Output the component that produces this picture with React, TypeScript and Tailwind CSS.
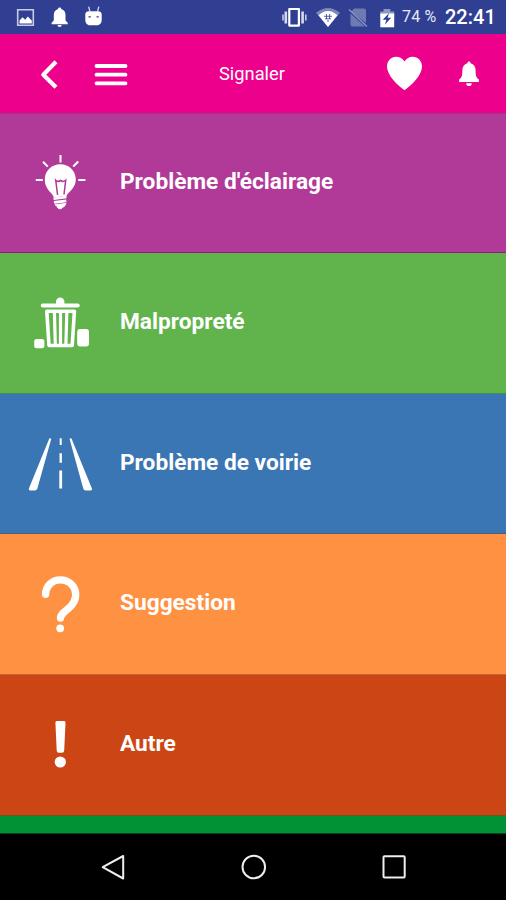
import React from 'react'

type CategoryRowProps = {
  icon: React.ReactNode
  label: string
  className: string
  labelClassName: string
}

function CategoryRow({ icon, label, className, labelClassName }: CategoryRowProps) {
  return (
    <li className={`flex shrink-0 items-start border-b pl-[15px] ${className}`}>
      {icon}
      <span className={`ml-[5px] whitespace-nowrap text-[22.7px] leading-[30px] font-bold ${labelClassName}`}>{label}</span>
    </li>
  )
}

function BulbIcon() {
  return (
    <svg className="mt-[26px] h-[86px] w-[100px]" viewBox="0 0 100 86" fill="none" stroke="white">
      <path d="M45.5 15v7.5M28 21.8l4.8 4.8M63.2 21.5l-5 5M20.8 40h7M63.2 40h7.2" strokeWidth="2" />
      <path d="M45.4 24.2c-9 0-15.6 6.8-15.6 15.4 0 5.6 2.4 9.6 5.7 12.9 1.8 1.8 2.9 3.1 3.2 4.9l12.9-1.4c.3-1.4 1.4-2.3 2.9-3.9 3.3-3.4 6.3-7 6.3-12.5 0-8.6-6.6-15.4-15.4-15.4z" fill="white" stroke="none" />
      <path d="M42.6 55l-1.9-14.8q2.3 2.3 4.8.2 2.5 2.1 5.2-.2L49 54.5" stroke="#b13997" strokeWidth="1.5" />
      <path d="M38.5 58.7l13-1.7M39 62.4l12.3-1.5" strokeWidth="2.6" />
      <path d="M40 64.7l11-1.3-1.6 3-1.9.9-1.7 1.7-3-.9-.4-1.4z" fill="white" strokeWidth=".9" />
    </svg>
  )
}

function TrashIcon() {
  return (
    <svg className="mt-[27px] h-[86px] w-[100px]" viewBox="0 0 100 86" fill="none" stroke="white">
      <path d="M27.7 25.4h35" strokeWidth="4" strokeLinecap="round" />
      <path d="M41 24v-2.2a4.2 4.2 0 0 1 8.4 0V24z" fill="white" stroke="none" />
      <path d="M31.8 31.3h27.6l-2.2 34.2H34z" strokeWidth="3.6" strokeLinejoin="round" />
      <path d="M39.4 32l.9 32.5M45.5 32v32.5M51.8 32l-.9 32.5" strokeWidth="3.2" />
      <rect x="19.2" y="59" width="10.2" height="9.2" rx="2.5" fill="white" stroke="none" />
      <rect x="62.2" y="49" width="11.8" height="17.5" rx="3" fill="white" stroke="none" />
    </svg>
  )
}

function RoadIcon() {
  return (
    <svg className="mt-[26px] h-[86px] w-[100px]" viewBox="0 0 100 86" fill="white">
      <path d="M34.4 18.2l1.9.5L22.3 68.7q-.6 1.7-2.4 1.7h-4.5q-2.4 0-1.3-2.3z" />
      <path d="M56.4 18.2l-1.9.5 13.8 50q.6 1.7 2.4 1.7h4.8q2.3 0 1.2-2.3z" />
      <path d="M44.7 18.3h2V25h-2zM44.5 33.3h2.4v9.5h-2.4zM44.3 50.5h2.8v18h-2.8z" />
    </svg>
  )
}

function QuestionIcon() {
  return (
    <svg className="mt-[26px] h-[86px] w-[100px]" viewBox="0 0 100 86" fill="none" stroke="white">
      <path d="M30.6 34.3C30.6 26.5 37 19.9 45.3 19.9c8.6 0 15.4 6.4 15.4 14.8 0 5.6-2.4 9.3-6.7 13.2-4.8 4.4-8.5 6-8.5 10.2" strokeWidth="7.4" strokeLinecap="round" />
      <circle cx="45.2" cy="68.3" r="3.9" fill="white" stroke="none" />
    </svg>
  )
}

function ExclamationIcon() {
  return (
    <svg className="mt-[25px] h-[86px] w-[100px]" viewBox="0 0 100 86" fill="white">
      <path d="M42 21h7q1.6 0 1.5 1.6l-1.3 28q-.1 2.2-2.2 2.2h-3.2q-2 0-2.1-2.2l-1.3-28Q40.3 21 42 21z" />
      <circle cx="45.3" cy="62" r="5.6" />
    </svg>
  )
}

function StatusBar() {
  return (
    <div className="flex h-[34px] shrink-0 items-center bg-[#303f92]">
      <svg className="h-[34px] w-[110px]" viewBox="0 0 110 34" fill="none">
        <path d="M17.7 9.7h15.6v15.6H17.7z" stroke="#c6cbe6" strokeWidth="1.6" />
        <path d="M19.5 23.5v-3l3-3.2 2.7 2.5 2.6-3.3 4 4v3z" fill="white" />
        <path d="M59.7 7.5c1 0 1.5.6 1.6 1.4 3 .8 4.2 3.3 4.2 6.2v5.4l2.2 2.2v1.5H51.6v-1.5l2.2-2.2v-5.4c0-2.9 1.3-5.4 4.2-6.2.1-.8.7-1.4 1.7-1.4zM57.5 25h4.2a2.1 2.1 0 0 1-4.2 0z" fill="white" />
        <path d="M85.3 14.5c0-2.3 1.6-3.2 3.6-3.2h9c2.2 0 3.8.9 3.8 3.2v5.3c0 3-1.7 5.5-4.7 5.5h-7c-3 0-4.7-2.5-4.7-5.5z" fill="white" />
        <path d="M90 12l-1.3-5.3M97.5 12l1.3-5.3" stroke="#d5d9ee" strokeWidth="1.3" />
        <path d="M88.5 16.8h2.3M96.5 16.8h2.3" stroke="#303f92" strokeWidth="1.3" />
      </svg>
      <svg className="ml-[170px] h-[34px] w-[116px]" viewBox="280 0 116 34" fill="none">
        <path d="M289.3 9h9.6v16.6h-9.6z" stroke="white" strokeWidth="2.2" strokeLinejoin="round" />
        <path d="M285.8 11.5v12M302.6 11.5v12" stroke="#d5d9ee" strokeWidth="2.6" />
        <path d="M283 14.5v6M305.8 14.5v6" stroke="#c6cbe6" strokeWidth="1.6" />
        <path d="M316 12.7q12-9.5 24 0L328 27z" fill="#7c86bb" />
        <path d="M318.5 15.3q9.5-8.5 19 0L328 27z" fill="white" />
        <path d="M324 16.3h8M325 18.8h6M326.5 14v5M329.6 14v5M327 21h2" stroke="#303f92" strokeWidth=".8" />
        <path d="M354 8.5h10q2 0 2 2v12.8L351.5 11.5zM350.5 13.5l14.5 13h-12.5q-2 0-2-2z" fill="#6f7ab2" />
        <path d="M349 9.5l18 17" stroke="#8f98c5" strokeWidth="1.3" />
        <path d="M380.3 11.5h3.2V9h6.8v2.5h3.9V18h-13.9z" fill="#8e96c4" />
        <path d="M380.3 13.5h13.9V27.3h-13.9z" fill="white" />
        <path d="M389 13l-6.2 6.8h3.6l-1.5 5 6.2-7h-3.5z" fill="#303f92" />
      </svg>
      <span className="ml-[6px] w-[37px] whitespace-nowrap text-[16px] leading-[20px] tracking-[0.2px] text-[#e6e9f6]">74 %</span>
      <span className="ml-[6px] whitespace-nowrap text-[20px] leading-[24px] font-medium">22:41</span>
    </div>
  )
}

function Header() {
  return (
    <header className="flex h-[80px] shrink-0 items-center border-b border-[#9c3590] bg-[#ec008c]">
      <svg className="h-[79px] w-[140px]" viewBox="0 34 140 79" fill="none" stroke="white" strokeLinejoin="round">
        <path d="M56 61.8L43.3 74.7 56 87.3" strokeWidth="4.2" />
        <path d="M96.5 66h29M96.5 74.7h29M96.5 83.3h29" strokeWidth="3.8" strokeLinecap="round" />
      </svg>
      <h1 className="w-[224px] text-center text-[18.3px] leading-[24px]">Signaler</h1>
      <svg className="h-[79px] w-[142px]" viewBox="364 34 142 79" fill="white">
        <path d="M404.5 90.2C397 84.8 387 75 387 66.4c0-5.4 4.2-9.6 9.2-9.6 3.6 0 6.4 1.7 8.3 4.7 1.9-3 4.8-4.7 8.3-4.7 5 0 9.2 4.2 9.2 9.6 0 8.6-10 18.4-17.5 23.8z" />
        <path d="M469 61.6c.9 0 1.5.7 1.6 1.6 3.2.8 5 3.5 5 6.8 0 5 .4 7.6 3.3 9.6v2.5h-19.8v-2.5c2.9-2 3.3-4.6 3.3-9.6 0-3.3 1.8-6 5-6.8.1-.9.7-1.6 1.6-1.6zM466.2 83.2h5.6a2.8 2.8 0 0 1-5.6 0z" />
      </svg>
    </header>
  )
}

function NavigationBar() {
  return (
    <nav className="flex h-[66px] shrink-0 items-center justify-around bg-black pr-[42px] pl-[44px]">
      <svg className="h-7 w-7" viewBox="0 0 28 28" fill="none" stroke="#eeeeee" strokeWidth="2">
        <path d="M23.2 3v22.5L2.7 14.2z" strokeLinejoin="round" />
      </svg>
      <svg className="h-7 w-7" viewBox="0 0 28 28" fill="none" stroke="#eeeeee" strokeWidth="2">
        <circle cx="13.8" cy="14" r="11.3" />
      </svg>
      <svg className="h-7 w-7" viewBox="0 0 28 28" fill="none" stroke="#eeeeee" strokeWidth="2">
        <rect x="3.5" y="3.3" width="21.2" height="21.2" rx="1" />
      </svg>
    </nav>
  )
}

export default function App() {
  const categories = [
    { icon: <BulbIcon />, label: "Problème d'éclairage", className: 'h-[139px] border-[#872078] bg-[#b13997]', labelClassName: 'mt-[53px]' },
    { icon: <TrashIcon />, label: 'Malpropreté', className: 'h-[141px] border-[#4b8c50] bg-[#61b44b]', labelClassName: 'mt-[54px]' },
    { icon: <RoadIcon />, label: 'Problème de voirie', className: 'h-[140px] border-[#4c6070] bg-[#3a75b4]', labelClassName: 'mt-[54px]' },
    { icon: <QuestionIcon />, label: 'Suggestion', className: 'h-[141px] border-[#bd6936] bg-[#ff9143]', labelClassName: 'mt-[54px]' },
    { icon: <ExclamationIcon />, label: 'Autre', className: 'h-[141px] border-[#6b5a1c] bg-[#cc4615]', labelClassName: 'mt-[54px]' },
  ]

  return (
    <div className="flex h-[900px] w-[506px] flex-col overflow-hidden bg-black font-['Roboto',sans-serif] text-white">
      <StatusBar />
      <Header />
      <ul className="flex h-[720px] flex-col overflow-hidden border-b border-[#04471c] bg-[#009234]">
        {categories.map((category) => (
          <CategoryRow key={category.label} {...category} />
        ))}
      </ul>
      <NavigationBar />
    </div>
  )
}
